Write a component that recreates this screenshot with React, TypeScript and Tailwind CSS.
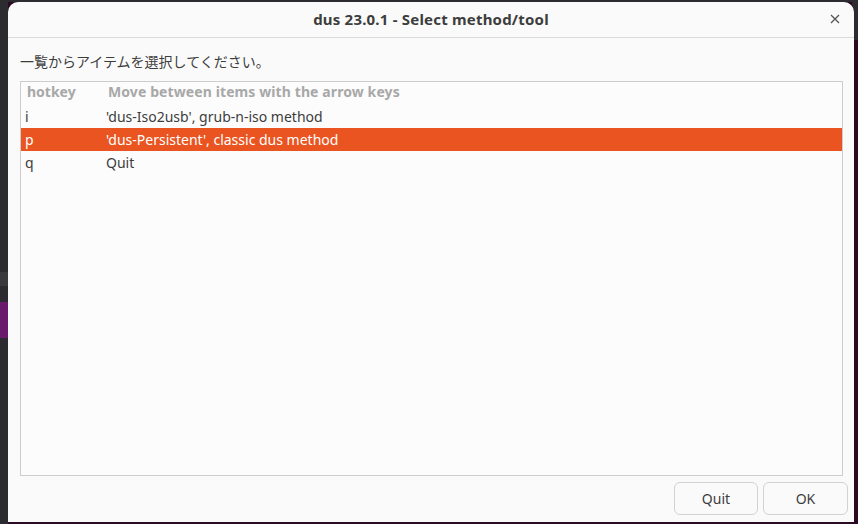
import type * as React from 'react';

const font = { fontFamily: '"Noto Sans", "Noto Sans CJK JP", sans-serif' };

const rows = [
  { key: 'i', label: "'dus-Iso2usb', grub-n-iso method", selected: false },
  { key: 'p', label: "'dus-Persistent', classic dus method", selected: true },
  { key: 'q', label: 'Quit', selected: false },
];

const App: React.FC = () => {
  return (
    <div className="relative w-[858px] h-[524px] overflow-hidden bg-[#2a0a22]" style={font}>
      {/* desktop behind the dialog */}
      <div className="absolute left-0 top-0 w-[8px] h-[524px] bg-[#2c2c30]">
        <div className="mt-[272px] h-[14px] bg-[#3a3a3e]" />
        <div className="mt-[16px] h-[36px] bg-[#6a1a6a]" />
      </div>
      <div className="absolute left-0 top-0 w-[858px] h-[2px] bg-[#2c2c30]" />
      <div className="absolute right-0 top-0 w-[6px] h-[40px] bg-[#2c2c30]" />

      {/* dialog window */}
      <div className="absolute left-[8px] top-[2px] w-[846px] h-[520px] bg-[#fafafa] rounded-t-[10px] flex flex-col text-[#3d3d3d]">
        <div className="relative h-[36px] flex items-center justify-center border-b border-[#dadada] shrink-0">
          <span className="text-[15px] font-bold text-[#3d3d3d] tracking-[0.2px]">dus 23.0.1 - Select method/tool</span>
          <span className="absolute right-[14px] top-[12px] text-[#555]">
            <svg width="10" height="10" viewBox="0 0 10 10">
              <path d="M1 1L9 9M9 1L1 9" stroke="#555" strokeWidth="1.3" />
            </svg>
          </span>
        </div>

        <div className="pl-[12px] pr-[11px] flex flex-col flex-1">
          <div className="h-[43px] flex items-center text-[14px] text-[#3d3d3d] pt-[3px]">
            一覧からアイテムを選択してください。
          </div>
          <div className="h-[395px] border border-[#cdcdcd] bg-[#fcfcfc] flex flex-col">
            <div className="h-[23px] flex items-center pb-[4px] text-[14px] font-bold text-[#a8a8a8]">
              <span className="w-[87px] pl-[6px]">hotkey</span>
              <span className="tracking-[0.1px]">Move between items with the arrow keys</span>
            </div>
            {rows.map((r) => (
              <div
                key={r.key}
                className={`h-[23px] flex items-center text-[14px] ${r.selected ? 'bg-[#e95420] text-white' : 'text-[#3d3d3d]'}`}
              >
                <span className="w-[85px] pl-[4px]">{r.key}</span>
                <span>{r.label}</span>
              </div>
            ))}
          </div>
          <div className="flex justify-end gap-[5px] mt-[6px] mr-[-5px]">
            <button className="w-[84px] h-[33px] rounded-[6px] border border-[#d2d2d2] bg-[#fafafa] text-[14px] text-[#3d3d3d]">
              Quit
            </button>
            <button className="w-[85px] h-[33px] rounded-[6px] border border-[#d2d2d2] bg-[#fafafa] text-[14px] text-[#3d3d3d]">
              OK
            </button>
          </div>
        </div>
      </div>
    </div>
  );
};

export default App;
